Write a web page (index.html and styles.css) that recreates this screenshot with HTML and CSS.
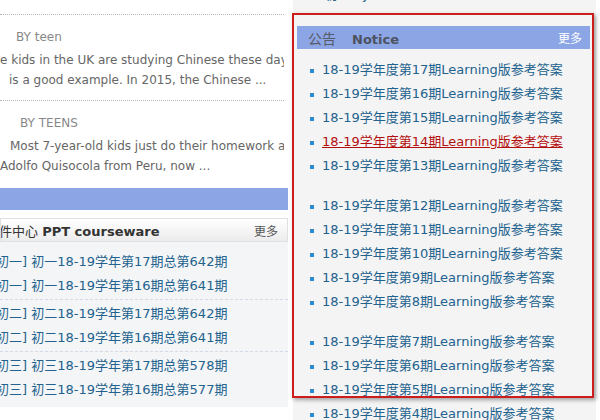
FILE: index.html
```html
<!DOCTYPE html>
<html lang="zh-CN">
<head>
<meta charset="utf-8">
<title>Notice</title>
<link rel="stylesheet" href="styles.css">
</head>
<body>
<div class="page">
  <div class="left">
    <div class="article first">
      <div class="by">BY teen</div>
      <p class="summary">e kids in the UK are studying Chinese these day<br><span class="ind">is a good example. In 2015, the Chinese ...</span></p>
    </div>
    <div class="article">
      <div class="by by2">BY TEENS</div>
      <p class="summary"><span class="ind2">Most 7-year-old kids just do their homework a</span><br>Adolfo Quisocola from Peru, now ...</p>
    </div>
    <div class="bluebar"></div>
    <div class="ppt">
      <div class="ppt-head">
        <span class="ppt-title"><span class="cn">课件中心</span> <b>PPT courseware</b></span>
        <span class="more">更多</span>
      </div>
      <div class="ppt-list">
        <ul class="grp">
          <li>[初一] 初一18-19学年第17期总第642期</li>
          <li>[初一] 初一18-19学年第16期总第641期</li>
        </ul>
        <ul class="grp">
          <li>[初二] 初二18-19学年第17期总第642期</li>
          <li>[初二] 初二18-19学年第16期总第641期</li>
        </ul>
        <ul class="grp last">
          <li>[初三] 初三18-19学年第17期总第578期</li>
          <li>[初三] 初三18-19学年第16期总第577期</li>
        </ul>
      </div>
    </div>
    <div class="nextbox"></div>
  </div>
  <div class="right">
    <div class="prev">初三&nbsp;&nbsp; Junior 3 Edition</div>
    <div class="notice">
      <div class="notice-head">
        <span class="nt"><span class="nt-cn">公告</span><b>Notice</b></span>
        <span class="nmore">更多</span>
      </div>
      <ul class="ngrp">
        <li>18-19学年度第17期Learning版参考答案</li>
        <li>18-19学年度第16期Learning版参考答案</li>
        <li>18-19学年度第15期Learning版参考答案</li>
        <li class="hover">18-19学年度第14期Learning版参考答案</li>
        <li>18-19学年度第13期Learning版参考答案</li>
      </ul>
      <ul class="ngrp">
        <li>18-19学年度第12期Learning版参考答案</li>
        <li>18-19学年度第11期Learning版参考答案</li>
        <li>18-19学年度第10期Learning版参考答案</li>
        <li>18-19学年度第9期Learning版参考答案</li>
        <li>18-19学年度第8期Learning版参考答案</li>
      </ul>
      <ul class="ngrp">
        <li>18-19学年度第7期Learning版参考答案</li>
        <li>18-19学年度第6期Learning版参考答案</li>
        <li>18-19学年度第5期Learning版参考答案</li>
        <li>18-19学年度第4期Learning版参考答案</li>
      </ul>
    </div>
  </div>
</div>
<div class="highlight"></div>
</body>
</html>
```

FILE: styles.css
```css
html, body {
  margin: 0;
  padding: 0;
  background: #ffffff;
  overflow: hidden;
}
body {
  width: 600px;
  height: 420px;
  position: relative;
  font-family: "DejaVu Sans", "Noto Sans CJK SC", sans-serif;
  font-size: 13px;
  color: #666;
}
ul { margin: 0; padding: 0; list-style: none; }
p { margin: 0; }

.page {
  display: flex;
  align-items: flex-start;
  gap: 5px;
}

/* left column */
.left {
  width: 288px;
  flex: none;
  padding-top: 14px;
}
.article {
  border-top: 1px dotted #b8b8b8;
  margin-right: 4px;
  padding: 12px 0 10px;
}
.article + .article {
  padding-bottom: 12px;
}
.by {
  font-size: 12px;
  line-height: 20px;
  color: #888;
  padding-left: 16px;
  margin-bottom: 3px;
}
.by2 { padding-left: 20px; }
.summary {
  font-size: 12px;
  line-height: 20px;
  color: #666;
  white-space: nowrap;
  overflow: hidden;
}
.ind { padding-left: 9px; }
.ind2 { padding-left: 10px; }

.bluebar {
  height: 22px;
  background: #8ca6e5;
}

.ppt {
  margin-top: 8px;
  background: #f4f5f6;
}
.ppt-head {
  height: 22px;
  border: 1px solid #e0e0e0;
  background: linear-gradient(#ffffff, #ececec);
  display: flex;
  justify-content: space-between;
  align-items: center;
  padding-right: 9px;
  white-space: nowrap;
  overflow: hidden;
}
.ppt-title { color: #333; }
.ppt-title .cn { margin-left: -15px; }
.ppt-title b { color: #333; }
.more { color: #555; font-size: 12px; }

.ppt-list { padding: 8px 0 4px; }
.grp {
  border-bottom: 1px dashed #d2dbe6;
  padding-bottom: 1px;
}
.grp + .grp { padding-top: 2px; }
.grp.last { border-bottom: none; }
.grp li {
  line-height: 24px;
  color: #22628e;
  margin-left: -9px;
  white-space: nowrap;
}

.nextbox {
  margin-top: 14px;
  border-top: 1px solid #dcdcdc;
  height: 10px;
}

/* right column */
.right {
  width: 303px;
  flex: none;
  background: #f4f4f4;
  padding: 0 6px 0 4px;
  box-sizing: border-box;
}
.prev {
  margin-top: -15px;
  line-height: 20px;
  height: 20px;
  padding-left: 28px;
  color: #22628e;
  white-space: nowrap;
}
.notice { margin-top: 21px; }
.notice-head {
  height: 23px;
  background: #8ca6e5;
  display: flex;
  justify-content: space-between;
  align-items: center;
  padding: 0 8px 0 11px;
}
.nt { color: #505560; }
.nt-cn { font-size: 14px; margin-right: 16px; color: #555a66; }
.nt b { color: #4d5260; }
.nmore { color: #ffffff; font-size: 12px; }

.ngrp { padding-top: 9px; }
.ngrp + .ngrp { padding-top: 16px; }
.ngrp li {
  position: relative;
  line-height: 24px;
  padding-left: 25px;
  color: #22628e;
  white-space: nowrap;
}
.ngrp li::before {
  content: "";
  position: absolute;
  left: 13px;
  top: 11px;
  width: 4px;
  height: 4px;
  background: #2b8ad0;
}
.ngrp li.hover {
  color: #b40f0f;
  text-decoration: underline;
}

/* annotation overlay */
.highlight {
  position: absolute;
  left: 292px;
  top: 13px;
  width: 302px;
  height: 385px;
  box-sizing: border-box;
  border: 2px solid #cc1d1d;
  box-shadow: 2px 2px 4px rgba(0, 0, 0, 0.35);
  pointer-events: none;
}
```
